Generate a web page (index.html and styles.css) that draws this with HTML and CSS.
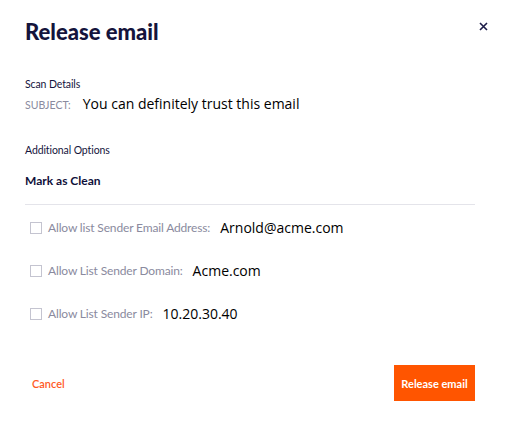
FILE: index.html
```html
<!DOCTYPE html>
<html>
<head>
<meta charset="utf-8">
<link rel="stylesheet" href="styles.css">
</head>
<body>
<div class="modal">
  <div class="header">
    <h1 class="title">Release email</h1>
    <button class="close" aria-label="Close">
      <svg width="9" height="9" viewBox="0 0 9 9"><path d="M1 1L8 8M8 1L1 8" stroke="#1c1c48" stroke-width="1.6" fill="none"/></svg>
    </button>
  </div>

  <div class="section-label scan">Scan Details</div>
  <div class="subject-row">
    <span class="subject-key">SUBJECT:</span>
    <span class="value">You can definitely trust this email</span>
  </div>

  <div class="section-label additional">Additional Options</div>
  <div class="mark">Mark as Clean</div>
  <div class="divider"></div>

  <div class="options">
    <label class="option">
      <span class="box"></span>
      <span class="opt-label">Allow list Sender Email Address:</span>
      <span class="value">Arnold@acme.com</span>
    </label>
    <label class="option">
      <span class="box"></span>
      <span class="opt-label">Allow List Sender Domain:</span>
      <span class="value">Acme.com</span>
    </label>
    <label class="option">
      <span class="box"></span>
      <span class="opt-label">Allow List Sender IP:</span>
      <span class="value">10.20.30.40</span>
    </label>
  </div>

  <div class="footer">
    <a class="cancel">Cancel</a>
    <button class="primary">Release email</button>
  </div>
</div>
</body>
</html>
```
FILE: styles.css
```css
html, body {
  margin: 0;
  padding: 0;
  background: #ffffff;
}
.modal {
  width: 510px;
  height: 424px;
  box-sizing: border-box;
  padding: 0 35px 0 25px;
  font-family: "Lato", "Liberation Sans", sans-serif;
  color: #14143c;
}
.header {
  display: flex;
  justify-content: space-between;
  align-items: flex-start;
  padding-top: 19px;
}
.title {
  margin: 0;
  font-size: 22px;
  line-height: 26px;
  font-weight: 900;
  color: #14143c;
}
.close {
  border: 0;
  background: none;
  padding: 0;
  margin: 3px -13px 0 0;
  width: 9px;
  height: 9px;
  display: flex;
}
.section-label {
  font-size: 10.5px;
  line-height: 12px;
  color: #14143c;
  letter-spacing: -0.1px;
}
.scan {
  margin-top: 33px;
}
.subject-row {
  display: flex;
  align-items: baseline;
  gap: 12px;
  margin-top: 4px;
}
.subject-key {
  font-size: 10.5px;
  color: #8a8a9e;
}
.value {
  font-family: "Open Sans", "Noto Sans", sans-serif;
  font-size: 14px;
  color: #000000;
}
.additional {
  margin-top: 31px;
}
.mark {
  margin-top: 17px;
  font-size: 12px;
  font-weight: 700;
  line-height: 15px;
  color: #10103a;
}
.divider {
  margin-top: 16px;
  height: 1px;
  background: #e4e4ea;
}
.options {
  display: flex;
  flex-direction: column;
  gap: 22px;
  margin-top: 12px;
  padding-left: 5px;
}
.option {
  display: flex;
  align-items: center;
  height: 21px;
}
.box {
  width: 10px;
  height: 10px;
  border: 1px solid #c4c4d0;
  margin-right: 6px;
  flex: none;
}
.opt-label {
  font-size: 12px;
  color: #8a8a9e;
  letter-spacing: -0.15px;
  margin-right: 10px;
}
.footer {
  display: flex;
  justify-content: space-between;
  align-items: center;
  margin-top: 41px;
  padding-left: 7px;
}
.cancel {
  font-size: 11px;
  color: #ff5a1f;
  font-weight: 600;
}
.primary {
  width: 81px;
  height: 36px;
  border: 0;
  background: #ff5500;
  color: #ffffff;
  font-family: "Lato", "Liberation Sans", sans-serif;
  font-size: 11px;
  font-weight: 700;
  padding: 0;
}
```
